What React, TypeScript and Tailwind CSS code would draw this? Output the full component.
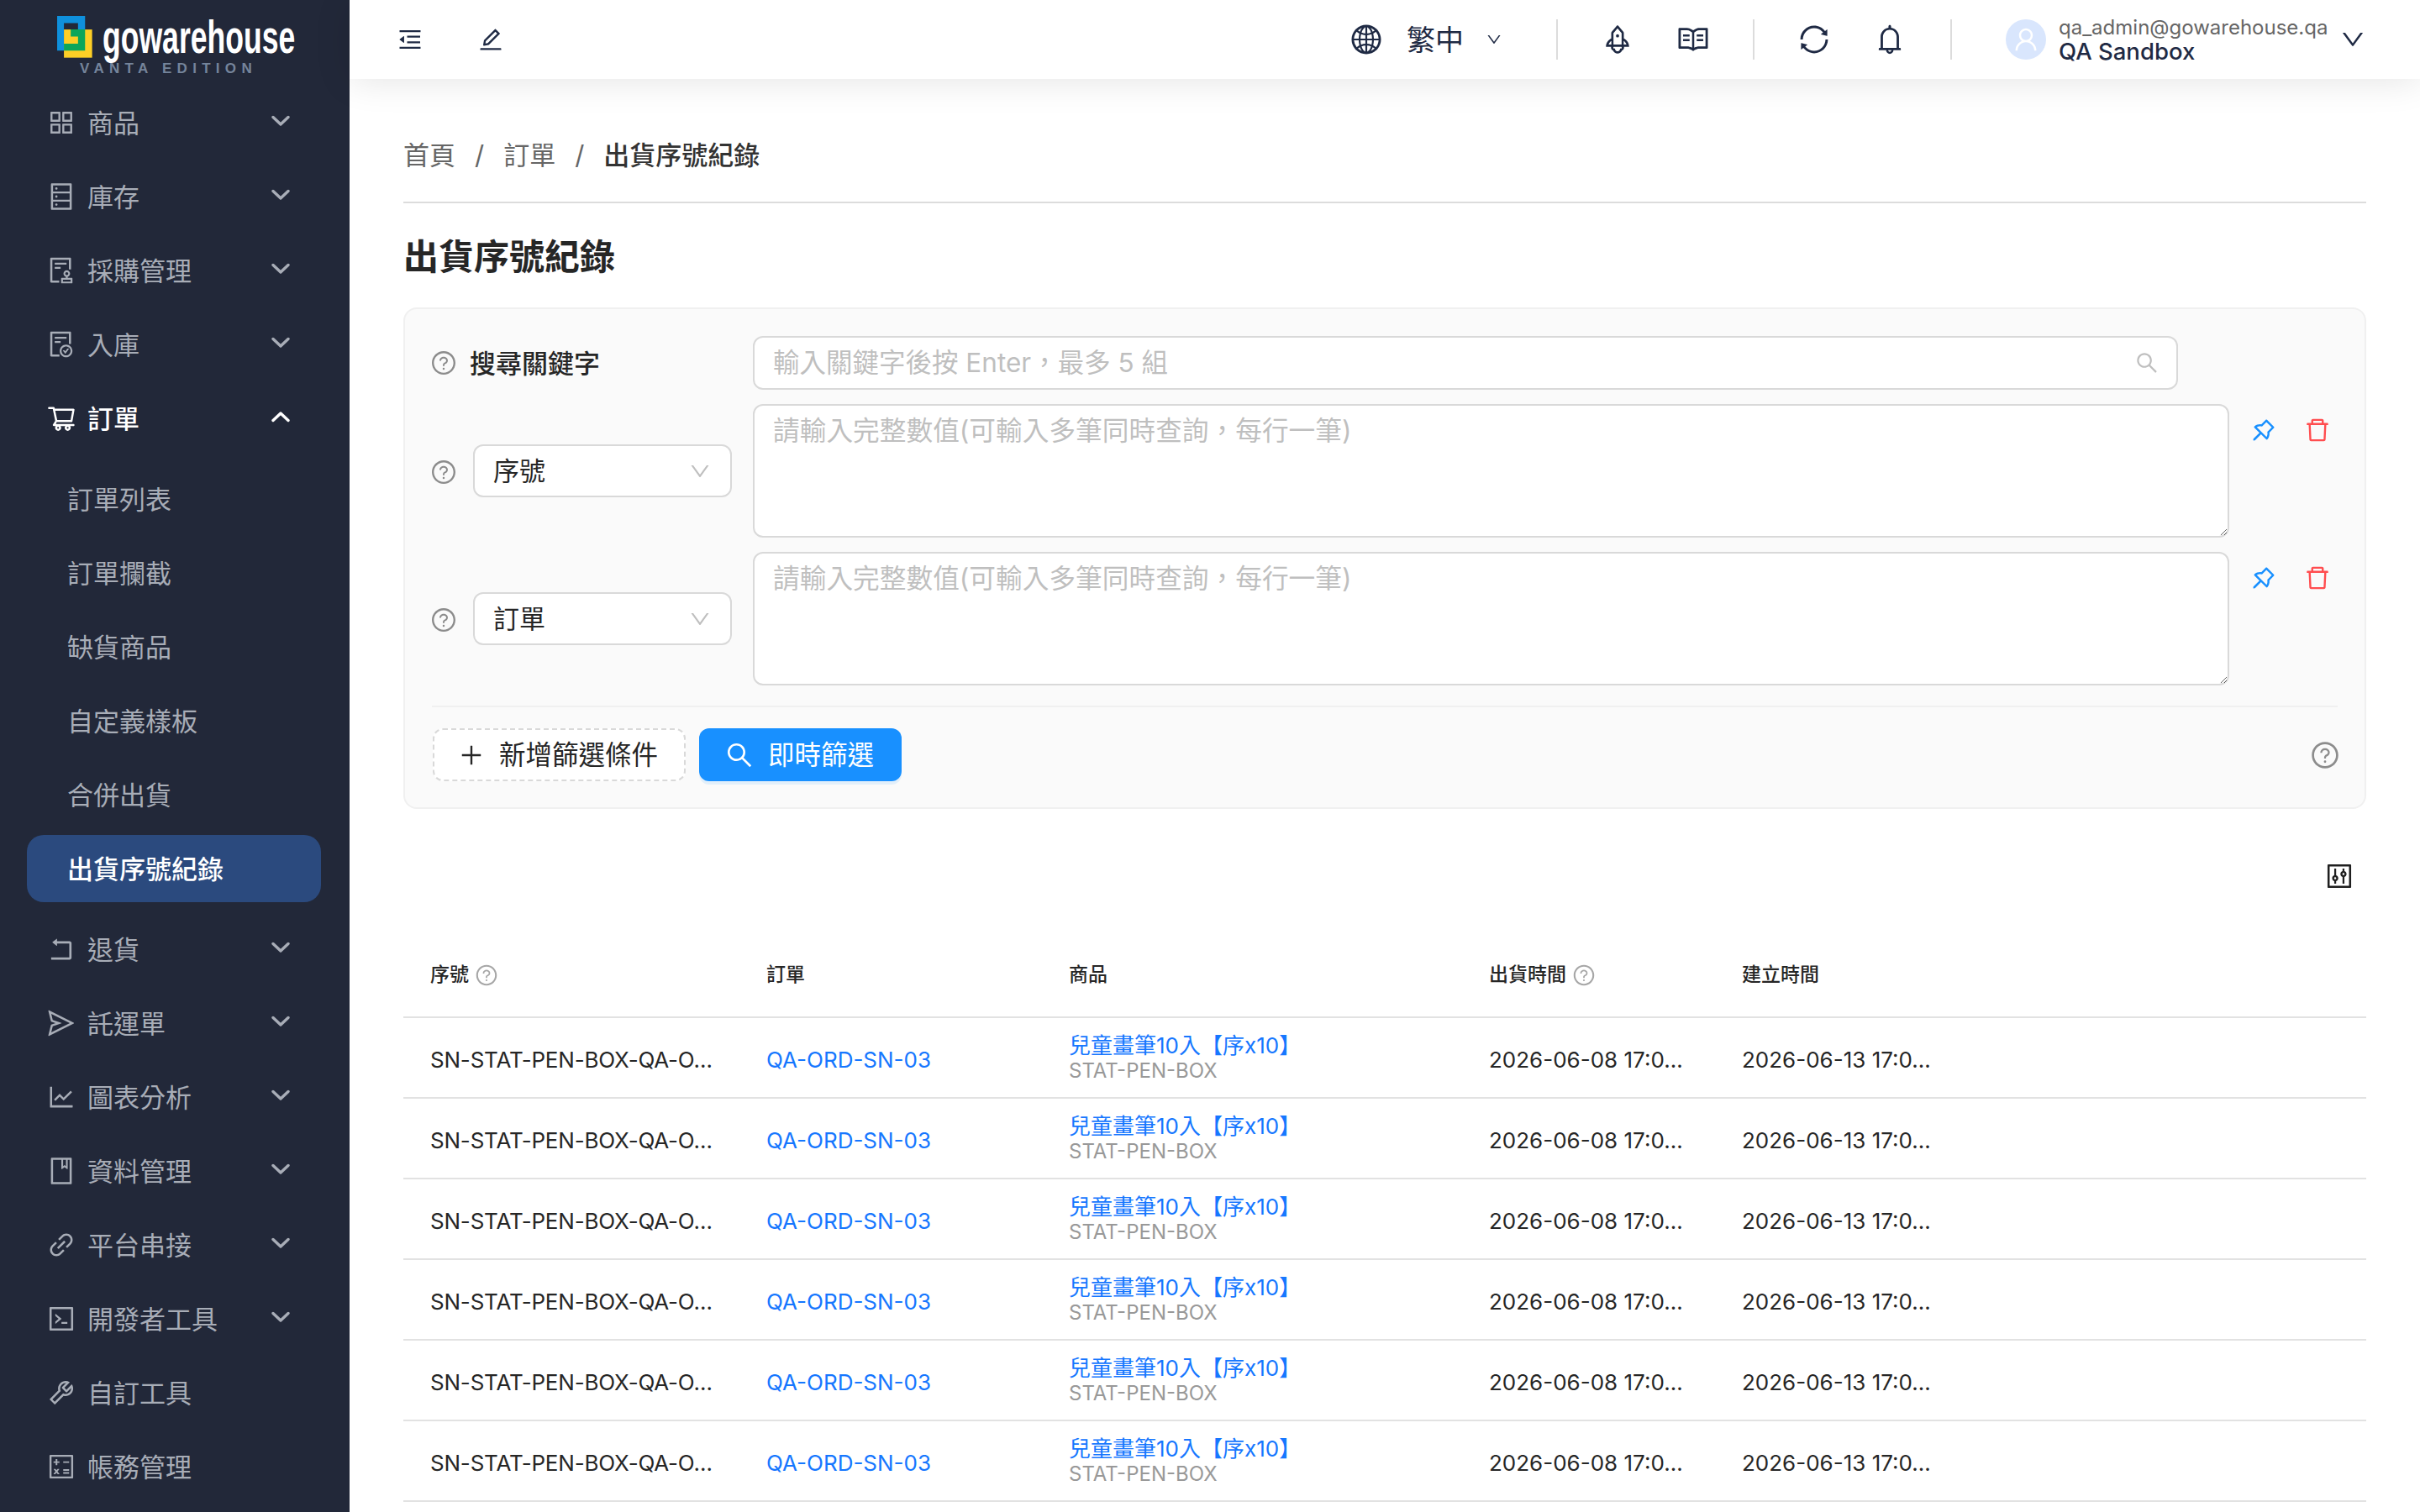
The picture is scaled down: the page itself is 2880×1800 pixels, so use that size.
import {
  AiOutlineAppstore,
  AiOutlineAudit,
  AiOutlineBell,
  AiOutlineBook,
  AiOutlineCalculator,
  AiOutlineCode,
  AiOutlineControl,
  AiOutlineDatabase,
  AiOutlineDelete,
  AiOutlineDown,
  AiOutlineEdit,
  AiOutlineFileDone,
  AiOutlineGlobal,
  AiOutlineLineChart,
  AiOutlineLink,
  AiOutlineMenuFold,
  AiOutlinePlus,
  AiOutlinePushpin,
  AiOutlineQuestionCircle,
  AiOutlineRead,
  AiOutlineRocket,
  AiOutlineRollback,
  AiOutlineSearch,
  AiOutlineSend,
  AiOutlineShoppingCart,
  AiOutlineSync,
  AiOutlineTool,
  AiOutlineUser,
} from "react-icons/ai";
import type { IconType } from "react-icons";

type MenuItem = { label: string; icon: IconType; arrow?: boolean };

const topMenu: MenuItem[] = [
  { label: "商品", icon: AiOutlineAppstore, arrow: true },
  { label: "庫存", icon: AiOutlineDatabase, arrow: true },
  { label: "採購管理", icon: AiOutlineAudit, arrow: true },
  { label: "入庫", icon: AiOutlineFileDone, arrow: true },
];

const orderChildren = ["訂單列表", "訂單攔截", "缺貨商品", "自定義樣板", "合併出貨"];

const bottomMenu: MenuItem[] = [
  { label: "退貨", icon: AiOutlineRollback, arrow: true },
  { label: "託運單", icon: AiOutlineSend, arrow: true },
  { label: "圖表分析", icon: AiOutlineLineChart, arrow: true },
  { label: "資料管理", icon: AiOutlineBook, arrow: true },
  { label: "平台串接", icon: AiOutlineLink, arrow: true },
  { label: "開發者工具", icon: AiOutlineCode, arrow: true },
  { label: "自訂工具", icon: AiOutlineTool },
  { label: "帳務管理", icon: AiOutlineCalculator },
];

const rows = [1, 2, 3, 4, 5, 6];

function Chevron({ up }: { up?: boolean }) {
  return (
    <svg width="22" height="14" viewBox="0 0 22 14" className="ml-auto mr-[37px] mb-[5px]" fill="none">
      <path
        d={up ? "M2 11.5 L11 3 L20 11.5" : "M2 2.5 L11 11 L20 2.5"}
        stroke="currentColor"
        strokeWidth="3.4"
        strokeLinecap="round"
        strokeLinejoin="round"
      />
    </svg>
  );
}

function MenuRow({ item }: { item: MenuItem }) {
  const Icon = item.icon;
  return (
    <div className="flex h-20 items-center pl-[23px] text-[#a8adb7]">
      <Icon size={36} className="shrink-0" />
      <span className="ml-[13px] pt-[3px] text-[31px]">{item.label}</span>
      {item.arrow && <Chevron />}
    </div>
  );
}

function Logo() {
  return (
    <div className="h-[98px] pl-[68px] pt-[19px]">
      <div className="flex h-[50px] items-end">
        <svg width="42" height="50" viewBox="24 22 125 149" className="shrink-0">
          <path d="M24 22H123V70H98V47H48V145H24Z" fill="#0f90dc" />
          <rect x="48" y="70" width="100" height="100" fill="#fdcf26" />
          <path d="M72 70H123V145H48V120H98V95H72Z" fill="#0ba65a" />
        </svg>
        <span className="ml-[12px] w-[226px] origin-left scale-x-[0.635] whitespace-nowrap font-['Liberation_Sans',sans-serif] text-[56px] font-bold leading-[50px] text-white">
          gowarehouse
        </span>
      </div>
      <div className="mt-[3px] whitespace-nowrap pl-[27px] font-['Liberation_Sans',sans-serif] text-[17px] font-bold leading-[20px] tracking-[6.3px] text-[#75849b]">
        VANTA EDITION
      </div>
    </div>
  );
}

function Sidebar() {
  return (
    <aside className="h-[1800px] w-[416px] shrink-0 overflow-hidden bg-[#222839]">
      <Logo />
      <nav className="ml-[32px] mr-[34px] mt-2 flex flex-col gap-2">
        {topMenu.map((item) => (
          <MenuRow key={item.label} item={item} />
        ))}
        <div className="flex h-20 items-center pl-[23px] font-medium text-white">
          <AiOutlineShoppingCart size={36} className="shrink-0" />
          <span className="ml-[13px] pt-[3px] text-[31px]">訂單</span>
          <Chevron up />
        </div>
        <div className="mt-2 flex flex-col gap-2">
          {orderChildren.map((label) => (
            <div key={label} className="flex h-20 items-center pl-[48px] pt-[3px] text-[31px] text-[#a8adb7]">
              {label}
            </div>
          ))}
          <div className="flex h-20 items-center rounded-[20px] bg-[#2b4a7e] pl-[48px] pt-[3px] text-[31px] font-medium text-white">
            出貨序號紀錄
          </div>
        </div>
        <div className="mt-2 flex flex-col gap-2">
          {bottomMenu.map((item) => (
            <MenuRow key={item.label} item={item} />
          ))}
        </div>
      </nav>
    </aside>
  );
}

function Divider() {
  return <div className="h-12 w-[2px] shrink-0 bg-[#dcdcdc]" />;
}

function Header() {
  return (
    <header className="relative z-10 flex h-[94px] shrink-0 items-center bg-white pl-[56px] pr-[64px] text-[#1f2a44] shadow-[0_2px_44px_rgba(0,0,0,0.11)]">
      <AiOutlineMenuFold size={32} />
      <AiOutlineEdit size={32} className="ml-[64px]" />
      <div className="ml-auto flex items-center">
        <AiOutlineGlobal size={40} />
        <span className="ml-[28px] text-[34px]">繁中</span>
        <AiOutlineDown size={20} className="ml-[26px]" />
        <div className="ml-[64px]">
          <Divider />
        </div>
        <AiOutlineRocket size={40} className="ml-[51px]" />
        <AiOutlineRead size={40} className="ml-[50px]" />
        <div className="ml-[51px]">
          <Divider />
        </div>
        <AiOutlineSync size={40} className="ml-[51px]" />
        <AiOutlineBell size={40} className="ml-[50px]" />
        <div className="ml-[52px]">
          <Divider />
        </div>
        <div className="ml-[64px] flex h-12 w-12 items-center justify-center rounded-full bg-[#d9e6fd] text-white">
          <AiOutlineUser size={34} />
        </div>
        <div className="ml-[15px] flex w-[318px] flex-col whitespace-nowrap">
          <span className="text-[24px] leading-[28px] text-[#666666]">qa_admin@gowarehouse.qa</span>
          <span className="text-[27.5px] font-medium leading-[28px]">QA Sandbox</span>
        </div>
        <AiOutlineDown size={32} className="ml-[16px]" />
      </div>
    </header>
  );
}

function HelpIcon({ size = 32 }: { size?: number }) {
  return <AiOutlineQuestionCircle size={size} className="shrink-0 text-[#8c8c8c]" />;
}

function FilterSelect({ label }: { label: string }) {
  return (
    <div className="ml-[19px] flex h-[63px] w-[308px] items-center rounded-[12px] border-2 border-[#d9d9d9] bg-white pl-[22px] pr-[22px] text-[31px] text-[#262626]">
      <span className="pt-[2px]">{label}</span>
      <AiOutlineDown size={28} className="ml-auto text-[#bfbfbf]" />
    </div>
  );
}

function TextFilter({ label }: { label: string }) {
  return (
    <div className="flex h-[159px]">
      <div className="flex w-[382px] shrink-0 items-center">
        <div className="-ml-[2px] flex items-center pt-[2px]">
          <HelpIcon />
        </div>
        <FilterSelect label={label} />
      </div>
      <textarea
        readOnly
        placeholder="請輸入完整數值(可輸入多筆同時查詢，每行一筆)"
        className="h-[159px] w-[1757px] shrink-0 rounded-[12px] border-2 border-[#d9d9d9] bg-white px-[22px] py-[8px] text-[31.7px] leading-[44px] outline-none placeholder:text-[#bfbfbf]"
      />
      <div className="ml-[24px] flex items-start gap-[30px] pt-[14px]">
        <AiOutlinePushpin size={34} className="text-[#1890ff]" />
        <AiOutlineDelete size={34} className="text-[#ff4d4f]" />
      </div>
    </div>
  );
}

function FilterCard() {
  return (
    <section className="mt-[33px] rounded-[16px] border-2 border-[#f0f0f0] bg-[#fafafa] px-[32px] pb-[31px] pt-[32px]">
      <div className="flex h-[64px]">
        <div className="flex w-[382px] shrink-0 items-center">
          <div className="-ml-[2px] flex items-center">
            <HelpIcon />
          </div>
          <span className="ml-[15px] pt-[2px] text-[31px] font-medium text-[#262626]">搜尋關鍵字</span>
        </div>
        <div className="flex w-[1696px] items-center rounded-[12px] border-2 border-[#d9d9d9] bg-white pl-[22px] pr-[20px]">
          <input
            readOnly
            placeholder="輸入關鍵字後按 Enter，最多 5 組"
            className="min-w-0 flex-1 bg-transparent text-[31.5px] outline-none placeholder:text-[#bfbfbf]"
          />
          <AiOutlineSearch size={30} className="text-[#bfbfbf]" />
        </div>
      </div>
      <div className="mt-[17px] flex flex-col gap-[17px]">
        <TextFilter label="序號" />
        <TextFilter label="訂單" />
      </div>
      <div className="mt-[24px] h-[2px] bg-[#f0f0f0]" />
      <div className="mt-[25px] flex items-center">
        <button className="ml-[1px] flex h-[63px] items-center rounded-[12px] border-2 border-dashed border-[#d9d9d9] bg-white pl-[28px] pr-[31px] text-[31.5px] text-[#262626]">
          <AiOutlinePlus size={32} />
          <span className="ml-[17px] pt-[1px]">新增篩選條件</span>
        </button>
        <button className="ml-[16px] flex h-[63px] items-center rounded-[12px] bg-[#1890ff] pl-[30px] pr-[33px] text-[31.5px] text-white shadow-[0_4px_0_rgba(24,144,255,0.1)]">
          <AiOutlineSearch size={36} />
          <span className="ml-[16px] pt-[1px]">即時篩選</span>
        </button>
        <div className="-mr-[3px] ml-auto flex items-center">
          <HelpIcon size={36} />
        </div>
      </div>
    </section>
  );
}

function HeadCell({ label, help }: { label: string; help?: boolean }) {
  return (
    <th className="h-[100px] border-b-2 border-[#e2e2e2] pl-[32px] text-left align-middle font-medium">
      <span className="inline-flex items-center gap-[7px] text-[23px] text-[#262626]">
        {label}
        {help && <AiOutlineQuestionCircle size={28} className="text-[#a6a6a6]" />}
      </span>
    </th>
  );
}

function OrderTable() {
  return (
    <table className="mt-[52px] w-full table-fixed border-collapse">
      <colgroup>
        <col className="w-[400px]" />
        <col className="w-[360px]" />
        <col className="w-[500px]" />
        <col className="w-[301px]" />
        <col />
      </colgroup>
      <thead>
        <tr>
          <HeadCell label="序號" help />
          <HeadCell label="訂單" />
          <HeadCell label="商品" />
          <HeadCell label="出貨時間" help />
          <HeadCell label="建立時間" />
        </tr>
      </thead>
      <tbody className="text-[26px] text-[#262626]">
        {rows.map((row) => (
          <tr key={row} className="h-[96px] border-b-2 border-[#e2e2e2]">
            <td className="pl-[32px] pt-[4px] tracking-[-0.2px] whitespace-nowrap">SN-STAT-PEN-BOX-QA-O…</td>
            <td className="pl-[32px] pt-[4px] whitespace-nowrap text-[#1677ff]">QA-ORD-SN-03</td>
            <td className="pl-[32px] pt-[2px] whitespace-nowrap">
              <div className="leading-[30px] text-[#1677ff]">兒童畫筆10入【序x10】</div>
              <div className="text-[24px] leading-[30px] text-[#999999]">STAT-PEN-BOX</div>
            </td>
            <td className="pl-[32px] pt-[4px] whitespace-nowrap">2026-06-08 17:0…</td>
            <td className="pl-[32px] pt-[4px] whitespace-nowrap">2026-06-13 17:0…</td>
          </tr>
        ))}
      </tbody>
    </table>
  );
}

export default function App() {
  return (
    <div className="flex h-[1800px] w-[2880px] overflow-hidden bg-white font-[Inter,'Noto_Sans_CJK_TC',sans-serif]">
      <Sidebar />
      <div className="flex min-w-0 flex-1 flex-col">
        <Header />
        <main className="px-[64px] pt-[69px]">
          <div className="flex h-[44px] items-center text-[31px] text-[#666666]">
            <span>首頁</span>
            <span className="mx-[23px]">/</span>
            <span>訂單</span>
            <span className="mx-[23px]">/</span>
            <span className="font-medium text-[#333333]">出貨序號紀錄</span>
          </div>
          <div className="mt-[33px] h-[2px] bg-[#dcdcdc]" />
          <h1 className="mt-[35px] h-[56px] pt-[1px] text-[42px] font-bold leading-[56px] text-[#262626]">出貨序號紀錄</h1>
          <FilterCard />
          <div className="mt-[64px] flex h-[32px] items-center justify-end pr-[14px]">
            <AiOutlineControl size={36} className="text-[#1f1f1f]" />
          </div>
          <OrderTable />
        </main>
      </div>
    </div>
  );
}
